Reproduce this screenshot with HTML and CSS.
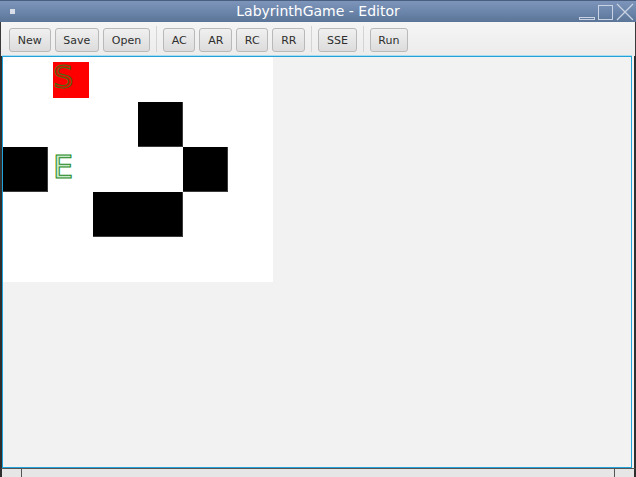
FILE: index.html
```html
<!DOCTYPE html>
<html>
<head>
<meta charset="utf-8">
<link rel="stylesheet" href="styles.css">
</head>
<body>
<div class="window">
  <div class="titlebar">
    <span class="app-icon"></span>
    <span class="title">LabyrinthGame - Editor</span>
    <div class="controls">
      <span class="ctl-min"></span>
      <span class="ctl-max"></span>
      <svg class="ctl-close" width="18" height="18" viewBox="0 0 18 18"><path d="M1 1 L17 17 M17 1 L1 17" stroke="#c9d3e3" stroke-width="1.2" fill="none"/></svg>
    </div>
  </div>
  <div class="toolbar">
    <button class="btn">New</button>
    <button class="btn">Save</button>
    <button class="btn">Open</button>
    <span class="sep"></span>
    <button class="btn">AC</button>
    <button class="btn">AR</button>
    <button class="btn">RC</button>
    <button class="btn">RR</button>
    <span class="sep"></span>
    <button class="btn">SSE</button>
    <span class="sep"></span>
    <button class="btn">Run</button>
  </div>
  <div class="main">
    <div class="frame">
      <div class="board">
        <div class="cell"></div><div class="cell"><div class="start"><span class="mark">S</span></div></div><div class="cell"></div><div class="cell"></div><div class="cell"></div><div class="cell"></div>
        <div class="cell"></div><div class="cell"></div><div class="cell"></div><div class="cell wall"></div><div class="cell"></div><div class="cell"></div>
        <div class="cell wall"></div><div class="cell"><span class="mark end">E</span></div><div class="cell"></div><div class="cell"></div><div class="cell wall"></div><div class="cell"></div>
        <div class="cell"></div><div class="cell"></div><div class="cell wall join"></div><div class="cell wall"></div><div class="cell"></div><div class="cell"></div>
        <div class="cell"></div><div class="cell"></div><div class="cell"></div><div class="cell"></div><div class="cell"></div><div class="cell"></div>
      </div>
    </div>
  </div>
  <div class="statusbar">
    <span class="grip"></span>
    <span class="grip-fill"></span>
    <span class="grip"></span>
  </div>
</div>
</body>
</html>
```
FILE: styles.css
```css
html, body {
  margin: 0;
  padding: 0;
  background: #2b2b2b;
}
.window {
  width: 636px;
  height: 477px;
  display: flex;
  flex-direction: column;
  background: #f2f2f2;
  font-family: "DejaVu Sans", sans-serif;
  overflow: hidden;
}
.titlebar {
  height: 22px;
  flex: none;
  display: flex;
  align-items: center;
  position: relative;
  background: linear-gradient(#7d95bb, #5b7599);
  border-top: 1px solid #4a5f80;
  box-sizing: border-box;
}
.app-icon {
  width: 5px;
  height: 5px;
  background: #d8dde8;
  margin-left: 10px;
}
.title {
  position: absolute;
  left: 0;
  right: 0;
  top: 0;
  text-align: center;
  color: #ffffff;
  font-size: 14px;
  line-height: 21px;
}
.controls {
  margin-left: auto;
  display: flex;
  align-items: flex-end;
  gap: 3px;
  padding-right: 2px;
  height: 18px;
  margin-top: 1px;
}
.ctl-min {
  width: 16px;
  height: 3px;
  border: 1px solid #c9d3e3;
  box-sizing: border-box;
  margin-bottom: 1px;
}
.ctl-max {
  width: 15px;
  height: 15px;
  border: 1px solid #c9d3e3;
  box-sizing: border-box;
  margin-bottom: 1px;
}
.toolbar {
  height: 34px;
  flex: none;
  display: flex;
  align-items: center;
  gap: 4px;
  padding-left: 8px;
  box-sizing: border-box;
  background: linear-gradient(#f5f5f5, #ececec);
  border-left: 1px solid #3a3a3a;
  border-right: 1px solid #3a3a3a;
}
.btn {
  height: 24px;
  padding: 0 7.75px;
  font-family: "DejaVu Sans", sans-serif;
  font-size: 11px;
  color: #2e2e2e;
  border: 1px solid #b9b9b9;
  border-radius: 3px;
  background: linear-gradient(#f0f0f0, #dcdcdc);
  margin-top: 2px;
}
.sep {
  width: 1px;
  height: 26px;
  background: #d4d4d4;
  margin: 0 2px;
}
.main {
  flex: 1;
  display: flex;
  border-left: 2px solid #2e2e2e;
  border-right: 2px solid #2e2e2e;
  padding-right: 2px;
  background: #f2f2f2;
}
.frame {
  flex: 1;
  border: 1px solid #1fa3d8;
  box-shadow: 0 -1px 0 #a9dcef;
  background: #f2f2f2;
}
.board {
  display: grid;
  grid-template-columns: repeat(6, 45px);
  grid-template-rows: repeat(5, 45px);
  width: 270px;
  background: #ffffff;
}
.cell {
  position: relative;
  box-sizing: border-box;
}
.wall {
  background: #000000;
  border-right: 1px solid #3a3a3a;
  border-bottom: 1px solid #3a3a3a;
}
.wall.join {
  border-right: none;
}
.start {
  position: absolute;
  left: 5px;
  top: 5px;
  width: 36px;
  height: 36px;
  background: #ff0000;
}
.mark {
  position: absolute;
  left: 5px;
  top: 1px;
  font-family: "DejaVu Sans", sans-serif;
  font-size: 32px;
  line-height: 38px;
  color: rgba(40, 160, 40, 0.25);
  -webkit-text-stroke: 1px #1c8a1c;
}
.start .mark {
  left: 0;
  top: -4px;
  color: rgba(60, 110, 0, 0.2);
  -webkit-text-stroke: 1px #4b6f10;
}
.statusbar {
  height: 8px;
  flex: none;
  display: flex;
  border-left: 2px solid #2e2e2e;
  border-right: 2px solid #2e2e2e;
  border-top: 1px solid #555555;
  background: #e6e6e6;
}
.grip {
  width: 19px;
  border-right: 1px solid #555555;
}
.grip:last-child {
  border-right: none;
  border-left: 1px solid #555555;
}
.grip-fill {
  flex: 1;
}
```
